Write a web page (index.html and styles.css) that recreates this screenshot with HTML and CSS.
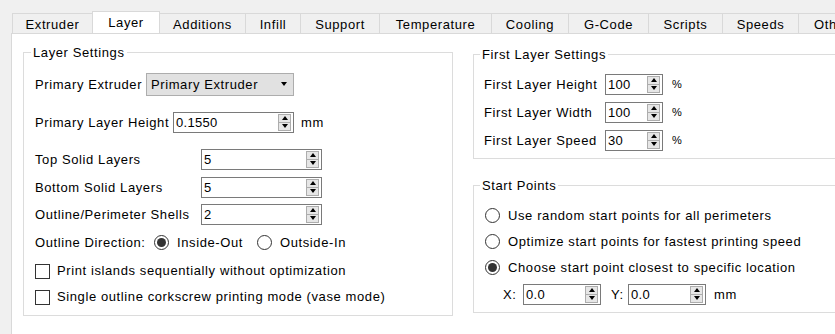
FILE: index.html
```html
<!DOCTYPE html>
<html>
<head>
<meta charset="utf-8">
<link rel="stylesheet" href="styles.css">
</head>
<body>
<div class="tabs">
  <div class="tab t-extruder">Extruder</div>
  <div class="tab active t-layer">Layer</div>
  <div class="tab t-additions">Additions</div>
  <div class="tab t-infill">Infill</div>
  <div class="tab t-support">Support</div>
  <div class="tab t-temperature">Temperature</div>
  <div class="tab t-cooling">Cooling</div>
  <div class="tab t-gcode">G-Code</div>
  <div class="tab t-scripts">Scripts</div>
  <div class="tab t-speeds">Speeds</div>
  <div class="tab t-other">Other</div>
</div>
<div class="panel">
  <div class="group group-layer">
    <div class="legend">Layer Settings</div>
    <div class="row m12">
      <span class="lbl w-pe">Primary Extruder</span>
      <div class="combo"><span class="combo-text">Primary Extruder</span><span class="caret"></span></div>
    </div>
    <div class="row m14">
      <span class="lbl w-plh">Primary Layer Height</span>
      <div class="spin w121"><span class="val">0.1550</span><span class="btns"><span class="sb up"></span><span class="sb dn"></span></span></div>
      <span class="unit">mm</span>
    </div>
    <div class="row m13">
      <span class="lbl w-solid">Top Solid Layers</span>
      <div class="spin w121"><span class="val">5</span><span class="btns"><span class="sb up"></span><span class="sb dn"></span></span></div>
    </div>
    <div class="row m4">
      <span class="lbl w-solid">Bottom Solid Layers</span>
      <div class="spin w121"><span class="val">5</span><span class="btns"><span class="sb up"></span><span class="sb dn"></span></span></div>
    </div>
    <div class="row m3">
      <span class="lbl w-solid">Outline/Perimeter Shells</span>
      <div class="spin w121"><span class="val">2</span><span class="btns"><span class="sb up"></span><span class="sb dn"></span></span></div>
    </div>
    <div class="row m4">
      <span class="lbl w-od">Outline Direction:</span>
      <span class="radio checked"></span><span class="opt-text w-io">Inside-Out</span>
      <span class="radio"></span><span class="opt-text">Outside-In</span>
    </div>
    <div class="row m4">
      <span class="check"></span><span class="check-text">Print islands sequentially without optimization</span>
    </div>
    <div class="row m2">
      <span class="check"></span><span class="check-text">Single outline corkscrew printing mode (vase mode)</span>
    </div>
  </div>
  <div class="right-col">
    <div class="group group-first">
      <div class="legend">First Layer Settings</div>
      <div class="row m10">
        <span class="lbl w-fl">First Layer Height</span>
        <div class="spin w58"><span class="val">100</span><span class="btns"><span class="sb up"></span><span class="sb dn"></span></span></div>
        <span class="pct">%</span>
      </div>
      <div class="row m4">
        <span class="lbl w-fl">First Layer Width</span>
        <div class="spin w58"><span class="val">100</span><span class="btns"><span class="sb up"></span><span class="sb dn"></span></span></div>
        <span class="pct">%</span>
      </div>
      <div class="row m4">
        <span class="lbl w-fl">First Layer Speed</span>
        <div class="spin w58"><span class="val">30</span><span class="btns"><span class="sb up"></span><span class="sb dn"></span></span></div>
        <span class="pct">%</span>
      </div>
    </div>
    <div class="group group-start">
      <div class="legend">Start Points</div>
      <div class="row m10">
        <span class="radio"></span><span class="opt-text">Use random start points for all perimeters</span>
      </div>
      <div class="row m2">
        <span class="radio"></span><span class="opt-text">Optimize start points for fastest printing speed</span>
      </div>
      <div class="row m2">
        <span class="radio checked"></span><span class="opt-text">Choose start point closest to specific location</span>
      </div>
      <div class="row m3 xy-row">
        <span class="xy-lbl w-x">X:</span>
        <div class="spin w78"><span class="val">0.0</span><span class="btns"><span class="sb up"></span><span class="sb dn"></span></span></div>
        <span class="xy-lbl w-y">Y:</span>
        <div class="spin w78"><span class="val">0.0</span><span class="btns"><span class="sb up"></span><span class="sb dn"></span></span></div>
        <span class="unit unit-xy">mm</span>
      </div>
    </div>
  </div>
</div>
</body>
</html>
```

FILE: styles.css
```css
* { box-sizing: border-box; }
html, body { margin: 0; padding: 0; }
body {
  width: 835px;
  height: 334px;
  overflow: hidden;
  background: #f0f0f0;
  font-family: "Liberation Sans", Arial, sans-serif;
  font-size: 13px;
  letter-spacing: 0.6px;
  color: #000;
}

/* Tabs */
.tabs {
  display: flex;
  align-items: flex-end;
  height: 33px;
  padding-left: 12px;
  overflow: hidden;
}
.tab {
  flex: none;
  height: 20px;
  border-top: 1px solid #d9d9d9;
  border-left: 1px solid #d9d9d9;
  background: #f0f0f0;
  display: flex;
  align-items: center;
  justify-content: center;
  white-space: nowrap;
  padding-top: 1px;
}
.tab.active {
  height: 23px;
  margin-bottom: -1px;
  background: #fff;
  border-right: 1px solid #d9d9d9;
  position: relative;
  z-index: 1;
  padding-top: 0;
  padding-bottom: 2px;
}
.tab.active + .tab { border-left: none; }
.t-extruder { width: 80px; }
.t-layer { width: 68px; }
.t-additions { width: 85px; }
.t-infill { width: 55px; }
.t-support { width: 79px; }
.t-temperature { width: 112px; }
.t-cooling { width: 77px; }
.t-gcode { width: 80px; }
.t-scripts { width: 74px; }
.t-speeds { width: 76px; }
.t-other { width: 37px; justify-content: flex-start; padding-left: 15px; overflow: hidden; }

/* Panel */
.panel {
  margin-left: 11px;
  height: 301px;
  background: #fff;
  border-left: 1px solid #d9d9d9;
  border-top: 1px solid #d9d9d9;
  display: flex;
  align-items: flex-start;
  gap: 20px;
  padding-left: 11px;
}

.group {
  border: 1px solid #dcdcdc;
  background: #fff;
}
.legend {
  width: max-content;
  height: 14px;
  line-height: 14px;
  margin-top: -7px;
  padding: 0 2px;
  background: #fff;
}

.group-layer {
  flex: none;
  width: 430px;
  margin-top: 18px;
  padding: 0 0 7px 11px;
}
.group-layer .legend { margin-left: -4px; }

.right-col {
  flex: none;
  width: 362px;
  display: flex;
  flex-direction: column;
  margin-top: 20px;
}
.group-first { padding: 0 0 6px 10px; border-right: none; }
.group-first .legend { margin-left: -4px; }
.group-start { margin-top: 26px; padding: 0 0 6px 11px; border-right: none; }
.group-start .legend { margin-left: -5px; }

/* Rows */
.row {
  height: 24px;
  display: flex;
  align-items: center;
  white-space: nowrap;
}
.m2 { margin-top: 2px; }
.m3 { margin-top: 3px; }
.m4 { margin-top: 4px; }
.m10 { margin-top: 10px; }
.m12 { margin-top: 12px; }
.m13 { margin-top: 13px; }
.m14 { margin-top: 14px; }

.lbl { flex: none; }
.w-pe { width: 111px; }
.w-plh { width: 138px; }
.w-solid { width: 166px; }
.w-od { width: 119px; }
.w-fl { width: 121px; }

/* Combo */
.combo {
  width: 148px;
  height: 23px;
  background: #e1e1e1;
  border: 1px solid #adadad;
  display: flex;
  align-items: center;
  justify-content: space-between;
  padding: 0 6px 0 4px;
}
.caret {
  width: 0;
  height: 0;
  border-left: 3.5px solid transparent;
  border-right: 3.5px solid transparent;
  border-top: 4px solid #000;
}

/* Spin box */
.spin {
  height: 21px;
  border: 1px solid #7a7a7a;
  background: #fff;
  display: flex;
  align-items: stretch;
  justify-content: space-between;
}
.w121 { width: 121px; }
.w58 { width: 58px; }
.w78 { width: 78px; }
.val {
  display: flex;
  align-items: center;
  padding-left: 2px;
  letter-spacing: 0.3px;
}
.btns {
  display: flex;
  flex-direction: column;
  width: 13px;
  margin: 1px 2px 1px 0;
}
.sb {
  flex: 1;
  border: 1px solid #adadad;
  background: #e6e6e6;
  display: flex;
  align-items: center;
  justify-content: center;
}
.sb + .sb { border-top: none; }
.sb.up::before {
  content: "";
  width: 0;
  height: 0;
  border-left: 3.5px solid transparent;
  border-right: 3.5px solid transparent;
  border-bottom: 4px solid #000;
}
.sb.dn::before {
  content: "";
  width: 0;
  height: 0;
  border-left: 3.5px solid transparent;
  border-right: 3.5px solid transparent;
  border-top: 4px solid #000;
}

.unit { margin-left: 7px; }
.pct { margin-left: 9px; font-size: 11px; }
.unit-xy { margin-left: 8px; }

/* Radio & checkbox */
.radio {
  flex: none;
  width: 15px;
  height: 15px;
  border: 1px solid #333;
  border-radius: 50%;
  background: #fff;
  display: flex;
  align-items: center;
  justify-content: center;
}
.radio.checked::before {
  content: "";
  width: 9px;
  height: 9px;
  border-radius: 50%;
  background: #333;
}
.opt-text { margin-left: 8px; }
.w-io { width: 80px; flex: none; }

.check {
  flex: none;
  width: 15px;
  height: 15px;
  border: 1px solid #333;
  background: #fff;
  margin-top: 2px;
}
.check-text { margin-left: 7px; }

.xy-row { padding-left: 18px; }
.xy-lbl { flex: none; }
.w-x { width: 20px; }
.w-y { width: 17px; margin-left: 10px; }
```
